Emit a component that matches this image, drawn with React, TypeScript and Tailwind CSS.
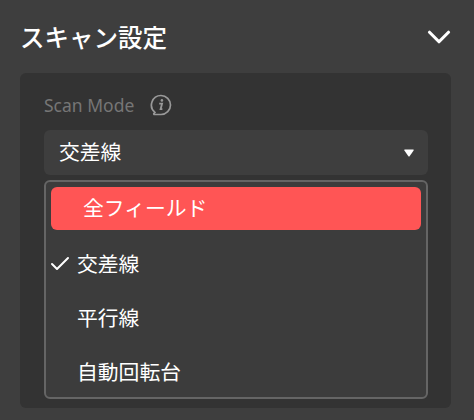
import { Check, ChevronDown } from "lucide-react";

const cjk = "font-['Noto_Sans','Noto_Sans_CJK_JP',sans-serif]";

function InfoIcon() {
  return (
    <svg width="22" height="22" viewBox="0 0 22 22" fill="none" className="text-[#999999]">
      <path
        d="M11 1.5a9.5 9.5 0 1 1 0 19H4.6c-.8 0-1.1-.7-.6-1.2l.9-1A9.5 9.5 0 0 1 11 1.5Z"
        stroke="currentColor"
        strokeWidth="1.7"
      />
      <circle cx="11.9" cy="6.4" r="1.3" fill="currentColor" />
      <path d="M9.2 9.6h2.9l-1.5 5.6h1.8" stroke="currentColor" strokeWidth="1.8" />
    </svg>
  );
}

export default function App() {
  return (
    <div className={`h-[420px] w-[474px] overflow-hidden bg-[#3e3e3e] pl-5 pr-[23px] pt-5 ${cjk}`}>
      <div className="flex h-[53px] items-start justify-between">
        <h2 className="text-[24.5px] leading-9 font-medium text-white">スキャン設定</h2>
        <ChevronDown size={38} strokeWidth={2} className="mt-[-2px] mr-[-7px] text-white" />
      </div>

      <div className="h-[335px] rounded-md bg-[#333333] pl-6 pr-[23px] pt-[14px]">
        <div className="flex h-[43px] items-start gap-4">
          <span className="text-[17.5px] leading-[36px] text-[#767676]">Scan Mode</span>
          <span className="mt-[7px]">
            <InfoIcon />
          </span>
        </div>

        <div className="flex h-[45px] items-center justify-between rounded-md bg-[#3e3e3e] pl-[15px] pr-[14px]">
          <span className="text-[20.8px] text-white">交差線</span>
          <svg width="10" height="8" viewBox="0 0 10 8" className="text-white">
            <path d="M1 .5h8c.6 0 .9.6.6 1.1L5.6 7.2c-.3.4-.9.4-1.2 0L.4 1.6C.1 1.1.4.5 1 .5Z" fill="currentColor" />
          </svg>
        </div>

        <div className="mt-[5px] h-[219px] rounded-md border-2 border-[#656565] bg-[#3c3c3c] px-[5px] pt-[5px]">
          <div className="mb-2 flex h-[43px] items-center rounded-md bg-[#ff5555] pl-8 text-[20.8px] text-white">
            全フィールド
          </div>
          <div className="relative flex h-[54px] items-center pl-[26px] text-[20.8px] text-white">
            <Check size={24} strokeWidth={2} className="absolute left-[-3px] top-[14px] text-white" />
            交差線
          </div>
          <div className="flex h-[54px] items-center pl-[26px] text-[20.8px] text-white">平行線</div>
          <div className="flex h-[54px] items-center pl-[26px] text-[20.8px] text-white">自動回転台</div>
        </div>
      </div>
    </div>
  );
}
